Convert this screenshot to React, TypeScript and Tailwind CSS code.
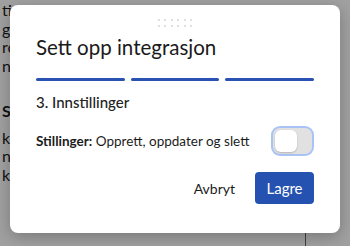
import React from 'react';

const bgLines = ['ti', 'go', 'rc', 'ni'];
const bgLines2 = ['ko', 'na', 'ka'];

const Toggle = () => (
  <div className="flex h-[26px] w-[39px] items-center rounded-[7px] bg-[#e1e1e1] pl-[2px] ring-2 ring-[#a9c3f6]">
    <div className="h-[22px] w-[22px] rounded-[6px] bg-white shadow-[0_1px_2px_rgba(0,0,0,0.2)]" />
  </div>
);

export default function App() {
  return (
    <div className="relative h-[246px] w-[350px] overflow-hidden bg-white font-['Lato',sans-serif] text-[#1c1c1c]">
      {/* page behind the dialog */}
      <div className="pl-[2px] pt-[1px] text-[16px] leading-[18.5px]">
        {bgLines.map((l) => (
          <div key={l} className="whitespace-nowrap">{l}</div>
        ))}
        <div className="mt-[27px] whitespace-nowrap font-bold">Sa</div>
        <div className="mt-[8px]">
          {bgLines2.map((l) => (
            <div key={l} className="whitespace-nowrap">{l}</div>
          ))}
        </div>
      </div>
      <div className="absolute left-[305px] top-[228px] h-[20px] border-l border-[#666]" />

      {/* backdrop */}
      <div className="absolute inset-0 bg-black/[0.37]" />

      {/* dialog */}
      <div className="absolute left-[10px] top-[5px] flex h-[228px] w-[330px] flex-col rounded-[8px] bg-white px-[26px] shadow-[0_4px_16px_rgba(0,0,0,0.25)]">
        <div className="mt-[14px] grid grid-cols-6 gap-x-[4.5px] gap-y-[4px] self-center">
          {Array.from({ length: 12 }).map((_, i) => (
            <span key={i} className="h-[2px] w-[2px] rounded-full bg-[#d6d6d6]" />
          ))}
        </div>
        <h1 className="mt-[6px] text-[20.5px] leading-[28px] text-[#1a1a1a]">Sett opp integrasjon</h1>
        <div className="mt-[17px] flex gap-[6px]">
          <div className="h-[3px] flex-1 rounded-full bg-[#2a52b3]" />
          <div className="h-[3px] flex-1 rounded-full bg-[#2a52b3]" />
          <div className="h-[3px] flex-1 rounded-full bg-[#2a52b3]" />
        </div>
        <h2 className="mt-[11px] text-[15px] font-medium leading-[20px] text-[#222]">3. Innstillinger</h2>
        <div className="mt-[16px] flex items-center justify-between pr-[2px]">
          <p className="text-[13.5px] leading-[18px] text-[#1c1c1c]">
            <span className="font-bold">Stillinger:</span> Opprett, oppdater og slett
          </p>
          <Toggle />
        </div>
        <div className="mt-[18px] flex items-center justify-end gap-[8px]">
          <button className="h-[32px] px-[12px] text-[14px] text-[#1c1c1c]">Avbryt</button>
          <button className="h-[32px] w-[59px] rounded-[4px] bg-[#2551b1] text-[15px] text-white">Lagre</button>
        </div>
      </div>
    </div>
  );
}
